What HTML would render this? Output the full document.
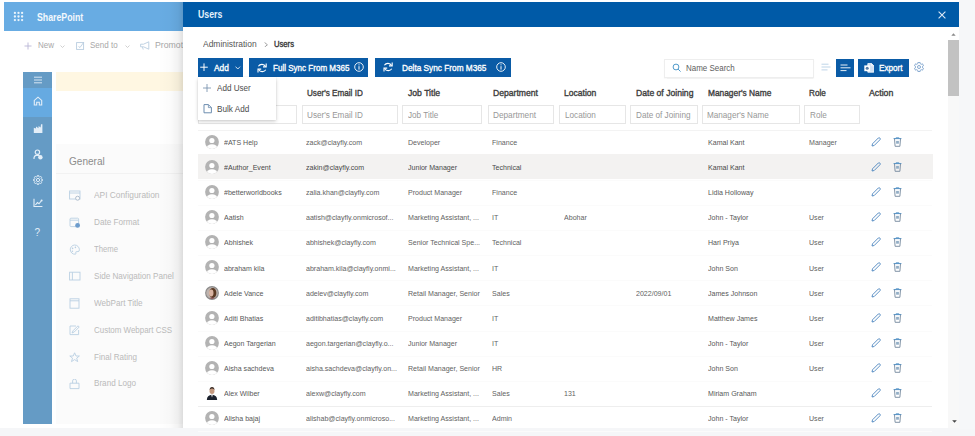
<!DOCTYPE html>
<html><head><meta charset="utf-8">
<style>
*{margin:0;padding:0;box-sizing:border-box}
html,body{width:975px;height:436px;overflow:hidden;background:#fff;font-family:"Liberation Sans",sans-serif}
.b{position:absolute;display:block}
.t{position:absolute;line-height:1;white-space:nowrap;transform-origin:0 50%}
</style></head><body>
<div class="b" style="left:0px;top:0px;width:975px;height:436px;background:#fff"></div>
<div class="b" style="left:4px;top:2px;width:200px;height:29px;background:#68ace3"></div>
<svg class="b" style="left:12.5px;top:11px;" width="11" height="11" viewBox="0 0 11 11"><circle cx="1.90" cy="1.90" r="1.15" fill="#eaf4fc"/><circle cx="5.50" cy="1.90" r="1.15" fill="#eaf4fc"/><circle cx="9.10" cy="1.90" r="1.15" fill="#eaf4fc"/><circle cx="1.90" cy="5.50" r="1.15" fill="#eaf4fc"/><circle cx="5.50" cy="5.50" r="1.15" fill="#eaf4fc"/><circle cx="9.10" cy="5.50" r="1.15" fill="#eaf4fc"/><circle cx="1.90" cy="9.10" r="1.15" fill="#eaf4fc"/><circle cx="5.50" cy="9.10" r="1.15" fill="#eaf4fc"/><circle cx="9.10" cy="9.10" r="1.15" fill="#eaf4fc"/></svg>
<div class="t" style="left:37.20px;top:13px;font-size:10px;color:#f2f8fd;font-weight:bold;transform:scaleX(0.877);">SharePoint</div>
<svg class="b" style="left:23.5px;top:41.5px;" width="8" height="8" viewBox="0 0 8 8"><path d="M4 0.5V7.5M0.5 4H7.5" stroke="#b9b5d6" stroke-width="0.9"/></svg>
<div class="t" style="left:37.70px;top:41px;font-size:8.6px;color:#a8a8a8;transform:scaleX(0.930);">New</div>
<svg class="b" style="left:59.5px;top:44.5px;" width="5" height="3" viewBox="0 0 5 3"><path d="M0.5 0.5L2.5 2.5L4.5 0.5" fill="none" stroke="#c4c4c4" stroke-width="0.8"/></svg>
<svg class="b" style="left:76px;top:41px;" width="9" height="9" viewBox="0 0 9 9"><rect x="0.6" y="1.6" width="7" height="6.8" fill="none" stroke="#b9cde0" stroke-width="0.9"/><path d="M2.5 5.5L4 6.5L7.8 1.2" fill="none" stroke="#b9cde0" stroke-width="0.9"/></svg>
<div class="t" style="left:90.30px;top:41px;font-size:8.6px;color:#a8a8a8;transform:scaleX(0.931);">Send to</div>
<svg class="b" style="left:124.5px;top:44.5px;" width="5" height="3" viewBox="0 0 5 3"><path d="M0.5 0.5L2.5 2.5L4.5 0.5" fill="none" stroke="#c4c4c4" stroke-width="0.8"/></svg>
<svg class="b" style="left:139.5px;top:41px;" width="10" height="9" viewBox="0 0 10 9"><path d="M0.6 3.2H3.5L8.8 0.8V8.2L3.5 5.8H0.6Z" fill="none" stroke="#b9cde0" stroke-width="0.9"/><path d="M2.5 6L3.2 8.5" stroke="#b9cde0" stroke-width="0.9"/></svg>
<div class="t" style="left:154.50px;top:41px;font-size:8.6px;color:#a8a8a8;transform:scaleX(1.015);">Promote</div>
<div class="b" style="left:23px;top:72px;width:29.3px;height:352px;background:#659bc5"></div>
<div class="b" style="left:23px;top:88.4px;width:29.3px;height:28.6px;background:#66aae1"></div>
<svg class="b" style="left:33px;top:76px;" width="10" height="8" viewBox="0 0 10 8"><path d="M1 1.2H9M1 4H9M1 6.8H9" stroke="#e3eef8" stroke-width="0.9"/></svg>
<svg class="b" style="left:33px;top:96px;" width="10" height="10" viewBox="0 0 10 10"><path d="M1.3 9V4.4L5 1.2L8.7 4.4V9H6.3V6.2H3.7V9Z" fill="none" stroke="#e3eef8" stroke-width="1.1"/></svg>
<svg class="b" style="left:33px;top:123px;" width="10" height="11" viewBox="0 0 10 11"><path d="M0.8 10H9.4V1.2L8 1.2L7.6 4.6L5.6 3L5.4 5.2L3.2 3.6L2.8 5.6L0.8 4.8Z" fill="#e3eef8"/></svg>
<svg class="b" style="left:33px;top:149px;" width="10" height="11" viewBox="0 0 10 11"><circle cx="4.4" cy="3.2" r="2.2" fill="none" stroke="#e3eef8" stroke-width="1.2"/><path d="M1 10Q0.6 6.4 4.4 6.2Q5.8 6.2 6.4 6.8" fill="none" stroke="#e3eef8" stroke-width="1.2"/><circle cx="7.4" cy="8.2" r="2.2" fill="#e3eef8"/></svg>
<svg class="b" style="left:33px;top:175px;" width="10" height="10" viewBox="0 0 10 10"><circle cx="5" cy="5" r="1.6" fill="none" stroke="#e3eef8" stroke-width="1"/><path d="M8.43 4.33L9.55 4.32L9.55 5.68L8.43 5.67L7.91 6.95L8.70 7.73L7.73 8.70L6.95 7.91L5.67 8.43L5.68 9.55L4.32 9.55L4.33 8.43L3.05 7.91L2.27 8.70L1.30 7.73L2.09 6.95L1.57 5.67L0.45 5.68L0.45 4.32L1.57 4.33L2.09 3.05L1.30 2.27L2.27 1.30L3.05 2.09L4.33 1.57L4.32 0.45L5.68 0.45L5.67 1.57L6.95 2.09L7.73 1.30L8.70 2.27L7.91 3.05Z" fill="none" stroke="#e3eef8" stroke-width="0.9" stroke-linejoin="round"/></svg>
<svg class="b" style="left:33px;top:197.5px;" width="10" height="9.5" viewBox="0 0 10 9.5"><path d="M1 0.8V8.6H9.4" fill="none" stroke="#e3eef8" stroke-width="1.1"/><path d="M2.4 7L4.4 4.6L6 5.8L8.2 3" fill="none" stroke="#e3eef8" stroke-width="1.1"/><circle cx="8.6" cy="2.6" r="1" fill="#e3eef8"/></svg>
<div class="t" style="left:34.60px;top:228px;font-size:10px;color:#e3eef8;">?</div>
<div class="b" style="left:56px;top:72px;width:127px;height:19px;background:#fff7e2"></div>
<div class="b" style="left:56px;top:144px;width:127px;height:280px;background:#fbfbfb"></div>
<div class="t" style="left:68.60px;top:156px;font-size:11px;color:#8c8c8c;transform:scaleX(0.912);">General</div>
<div class="b" style="left:56px;top:172.6px;width:127px;height:1px;background:#f2f2f2"></div>
<div class="t" style="left:93.50px;top:191px;font-size:8.8px;color:#bababa;transform:scaleX(0.950);">API Configuration</div>
<svg class="b" style="left:69px;top:190.2px;" width="12" height="11" viewBox="0 0 12 11"><rect x="0.6" y="1" width="10.4" height="8" fill="none" stroke="#b9cfe2" stroke-width="0.9"/><path d="M0.6 3H11" stroke="#b9cfe2" stroke-width="0.9"/><circle cx="8.6" cy="8.2" r="2" fill="#fbfbfb" stroke="#a8b8c8" stroke-width="0.9"/></svg>
<div class="t" style="left:93.50px;top:218px;font-size:8.8px;color:#bababa;transform:scaleX(0.928);">Date Format</div>
<svg class="b" style="left:69px;top:217.1px;" width="12" height="11" viewBox="0 0 12 11"><rect x="1" y="1.2" width="8.6" height="8.4" rx="1" fill="none" stroke="#b9cfe2" stroke-width="0.9"/><path d="M1 3.2H9.6" stroke="#b9cfe2" stroke-width="0.9"/><circle cx="8.6" cy="8.4" r="2.4" fill="#6d9ccc"/></svg>
<div class="t" style="left:93.50px;top:245px;font-size:8.8px;color:#bababa;transform:scaleX(0.876);">Theme</div>
<svg class="b" style="left:69px;top:244.0px;" width="12" height="11" viewBox="0 0 12 11"><path d="M5.6 1A4.6 4.6 0 1 0 6.2 10.2Q7.4 10.2 6.8 8.8Q6.4 7.6 7.8 7.6H9Q10.4 7.6 10.4 5.8A4.8 4.8 0 0 0 5.6 1Z" fill="none" stroke="#b9cfe2" stroke-width="0.9"/><circle cx="3.6" cy="4.4" r="0.8" fill="#b9cfe2"/><circle cx="6.4" cy="3.4" r="0.8" fill="#b9cfe2"/><circle cx="3.4" cy="7.2" r="0.8" fill="#b9cfe2"/></svg>
<div class="t" style="left:93.50px;top:272px;font-size:8.8px;color:#bababa;transform:scaleX(0.922);">Side Navigation Panel</div>
<svg class="b" style="left:69px;top:270.9px;" width="12" height="11" viewBox="0 0 12 11"><rect x="0.6" y="1.2" width="10.4" height="7.8" fill="none" stroke="#b9cfe2" stroke-width="0.9"/><path d="M3.4 1.2V9" stroke="#b9cfe2" stroke-width="0.9"/></svg>
<div class="t" style="left:93.50px;top:299px;font-size:8.8px;color:#bababa;transform:scaleX(0.923);">WebPart Title</div>
<svg class="b" style="left:69px;top:297.79999999999995px;" width="12" height="11" viewBox="0 0 12 11"><rect x="1" y="0.8" width="9" height="9.4" fill="none" stroke="#b9cfe2" stroke-width="0.9"/><path d="M1 2.8H10" stroke="#b9cfe2" stroke-width="0.9"/></svg>
<div class="t" style="left:93.50px;top:326px;font-size:8.8px;color:#bababa;transform:scaleX(0.903);">Custom Webpart CSS</div>
<svg class="b" style="left:69px;top:324.7px;" width="12" height="11" viewBox="0 0 12 11"><path d="M7 1H1V9.6H9.6V5" fill="none" stroke="#b9cfe2" stroke-width="0.9"/><path d="M3 8L4 5.8L9 0.8L10.2 2L5.2 7Z" fill="none" stroke="#b9cfe2" stroke-width="0.9"/></svg>
<div class="t" style="left:93.50px;top:353px;font-size:8.8px;color:#bababa;transform:scaleX(0.916);">Final Rating</div>
<svg class="b" style="left:69px;top:351.59999999999997px;" width="12" height="11" viewBox="0 0 12 11"><path d="M5.6 0.8L7 4H10.4L7.7 6.1L8.7 9.6L5.6 7.6L2.5 9.6L3.5 6.1L0.8 4H4.2Z" fill="none" stroke="#b9cfe2" stroke-width="0.9"/></svg>
<div class="t" style="left:93.50px;top:379px;font-size:8.8px;color:#bababa;transform:scaleX(0.923);">Brand Logo</div>
<svg class="b" style="left:69px;top:378.5px;" width="12" height="11" viewBox="0 0 12 11"><path d="M1 4.2H10V9.6H1Z M3.6 4.2V2A1.9 1.9 0 0 1 7.4 2V4.2" fill="none" stroke="#b9cfe2" stroke-width="0.9"/></svg>
<div class="b" style="left:158px;top:2px;width:25px;height:426px;background:linear-gradient(to right,rgba(0,0,0,0) 0%,rgba(0,0,0,0.015) 50%,rgba(0,0,0,0.05) 80%,rgba(0,0,0,0.12) 100%)"></div>
<div class="b" style="left:0px;top:427.6px;width:975px;height:8.4px;background:#f5f6f8"></div>
<div class="b" style="left:958.8px;top:0px;width:16.2px;height:428.5px;background:#f6f7f9"></div>
<div class="b" style="left:183px;top:2px;width:775.8px;height:425.6px;background:#fff"></div>
<div class="b" style="left:183px;top:2px;width:775.8px;height:25px;background:#005aa7"></div>
<div class="t" style="left:197.70px;top:10px;font-size:10.4px;color:#e4f0fb;font-weight:bold;transform:scaleX(0.844);">Users</div>
<svg class="b" style="left:937.5px;top:11px;" width="8" height="8" viewBox="0 0 8 8"><path d="M0.6 0.6L7.4 7.4M7.4 0.6L0.6 7.4" stroke="#dce9f6" stroke-width="1.1"/></svg>
<div class="t" style="left:202.60px;top:40px;font-size:8.6px;color:#555555;transform:scaleX(0.984);">Administration</div>
<svg class="b" style="left:264px;top:41.6px;" width="4.5" height="5.6" viewBox="0 0 4.5 5.6"><path d="M0.6 0.5L3.4 2.8L0.6 5.1" fill="none" stroke="#8f8f8f" stroke-width="0.85"/></svg>
<div class="t" style="left:273.80px;top:40px;font-size:8.6px;color:#333333;-webkit-text-stroke:0.35px #333333;transform:scaleX(0.891);">Users</div>
<div class="b" style="left:198px;top:58.4px;width:45.4px;height:18.6px;background:#0a5ba6"></div>
<svg class="b" style="left:200px;top:62.6px;" width="8" height="8.4" viewBox="0 0 8 8.4"><path d="M4 0.4V8M0.2 4.2H7.8" stroke="#fff" stroke-width="1"/></svg>
<div class="t" style="left:214.00px;top:63px;font-size:9.6px;color:#fff;-webkit-text-stroke:0.35px #fff;transform:scaleX(0.866);">Add</div>
<svg class="b" style="left:235px;top:65.5px;" width="6" height="4" viewBox="0 0 6 4"><path d="M0.5 0.6L2.8 3L5.1 0.6" fill="none" stroke="#e0ecf7" stroke-width="0.9"/></svg>
<div class="b" style="left:249.2px;top:58.4px;width:119px;height:18.6px;background:#0a5ba6"></div>
<svg class="b" style="left:257px;top:62.5px;" width="10.4" height="10" viewBox="0 0 10.4 10"><path d="M8.6 3.6A4.2 4.2 0 0 0 1.4 3.2" fill="none" stroke="#fff" stroke-width="1.1"/><path d="M9.2 0.6V3.9H6" fill="none" stroke="#fff" stroke-width="1.1"/><path d="M1.6 6.4A4.2 4.2 0 0 0 8.8 6.8" fill="none" stroke="#fff" stroke-width="1.1"/><path d="M1 9.4V6.1H4.2" fill="none" stroke="#fff" stroke-width="1.1"/></svg>
<div class="t" style="left:272.80px;top:63px;font-size:9.6px;color:#fff;-webkit-text-stroke:0.35px #fff;transform:scaleX(0.839);">Full Sync From M365</div>
<svg class="b" style="left:353.5px;top:62px;" width="10" height="10" viewBox="0 0 10 10"><circle cx="5" cy="5" r="4.3" fill="none" stroke="#fff" stroke-width="0.9"/><path d="M5 4.2V7.6" stroke="#fff" stroke-width="1"/><circle cx="5" cy="2.8" r="0.6" fill="#fff"/></svg>
<div class="b" style="left:374.8px;top:58.4px;width:136px;height:18.6px;background:#0a5ba6"></div>
<svg class="b" style="left:382.8px;top:62.4px;" width="10.4" height="10" viewBox="0 0 10.4 10"><path d="M8.6 3.6A4.2 4.2 0 0 0 1.4 3.2" fill="none" stroke="#fff" stroke-width="1.1"/><path d="M9.2 0.6V3.9H6" fill="none" stroke="#fff" stroke-width="1.1"/><path d="M1.6 6.4A4.2 4.2 0 0 0 8.8 6.8" fill="none" stroke="#fff" stroke-width="1.1"/><path d="M1 9.4V6.1H4.2" fill="none" stroke="#fff" stroke-width="1.1"/></svg>
<div class="t" style="left:402.00px;top:63px;font-size:9.6px;color:#fff;-webkit-text-stroke:0.35px #fff;transform:scaleX(0.861);">Delta Sync From M365</div>
<svg class="b" style="left:495.8px;top:62px;" width="10" height="10" viewBox="0 0 10 10"><circle cx="5" cy="5" r="4.3" fill="none" stroke="#fff" stroke-width="0.9"/><path d="M5 4.2V7.6" stroke="#fff" stroke-width="1"/><circle cx="5" cy="2.8" r="0.6" fill="#fff"/></svg>
<div class="b" style="left:664.4px;top:58.7px;width:149.5px;height:19.2px;background:#fff;border:1px solid #eeeeee;box-shadow:0 0.5px 1px rgba(0,0,0,0.05)"></div>
<svg class="b" style="left:671.5px;top:62.5px;" width="10" height="10" viewBox="0 0 10 10"><circle cx="4" cy="4" r="2.9" fill="none" stroke="#3d8ec4" stroke-width="0.9"/><path d="M6.1 6.1L8.6 8.6" stroke="#3d8ec4" stroke-width="0.9"/></svg>
<div class="t" style="left:686.20px;top:64px;font-size:8.6px;color:#5e5e5e;transform:scaleX(0.928);">Name Search</div>
<svg class="b" style="left:821px;top:63px;" width="10" height="8" viewBox="0 0 10 8"><path d="M0.5 1.2H7.5M0.5 4H9.5M0.5 6.9H6.5" stroke="#a9c7e0" stroke-width="0.75"/></svg>
<div class="b" style="left:836px;top:58.5px;width:18px;height:18.3px;background:#0a5ba6"></div>
<svg class="b" style="left:839.5px;top:63.5px;" width="11" height="8" viewBox="0 0 11 8"><path d="M0.5 1H7.5M0.5 3.8H10.5M0.5 6.6H6.5" stroke="#fff" stroke-width="0.9"/></svg>
<div class="b" style="left:857.5px;top:58.5px;width:51.3px;height:18.5px;background:#0a5ba6"></div>
<svg class="b" style="left:863.5px;top:62.8px;" width="10.5" height="10" viewBox="0 0 10.5 10"><path d="M3.8 0.6H7.6L9.8 2.8V9.2H3.8Z" fill="#cfe1f3" stroke="#fff" stroke-width="0.8"/><path d="M7.6 0.6V2.8H9.8" fill="none" stroke="#fff" stroke-width="0.7"/><rect x="0.3" y="2.4" width="5.8" height="5.8" fill="#fff"/><circle cx="3.2" cy="5.3" r="1.5" fill="#5a7ea6"/></svg>
<div class="t" style="left:878.70px;top:63px;font-size:9.6px;color:#fff;-webkit-text-stroke:0.35px #fff;transform:scaleX(0.851);">Export</div>
<svg class="b" style="left:914.3px;top:62px;" width="10" height="10" viewBox="0 0 10 10"><circle cx="5" cy="5" r="1.5" fill="none" stroke="#7aa2cc" stroke-width="0.9"/><path d="M3.87 1.58L3.90 0.43L6.10 0.43L6.13 1.58L7.40 2.32L8.41 1.76L9.51 3.67L8.52 4.27L8.52 5.73L9.51 6.33L8.41 8.24L7.40 7.68L6.13 8.42L6.10 9.57L3.90 9.57L3.87 8.42L2.60 7.68L1.59 8.24L0.49 6.33L1.48 5.73L1.48 4.27L0.49 3.67L1.59 1.76L2.60 2.32Z" fill="none" stroke="#7aa2cc" stroke-width="0.9" stroke-linejoin="round"/></svg>
<div class="t" style="left:306.70px;top:89px;font-size:8.6px;color:#3d3d3d;-webkit-text-stroke:0.35px #3d3d3d;transform:scaleX(0.946);">User&#39;s Email ID</div>
<div class="t" style="left:407.80px;top:89px;font-size:8.6px;color:#3d3d3d;-webkit-text-stroke:0.35px #3d3d3d;transform:scaleX(1.005);">Job Title</div>
<div class="t" style="left:492.80px;top:89px;font-size:8.6px;color:#3d3d3d;-webkit-text-stroke:0.35px #3d3d3d;transform:scaleX(1.001);">Department</div>
<div class="t" style="left:563.70px;top:89px;font-size:8.6px;color:#3d3d3d;-webkit-text-stroke:0.35px #3d3d3d;transform:scaleX(0.993);">Location</div>
<div class="t" style="left:635.50px;top:89px;font-size:8.6px;color:#3d3d3d;-webkit-text-stroke:0.35px #3d3d3d;transform:scaleX(1.002);">Date of Joining</div>
<div class="t" style="left:707.80px;top:89px;font-size:8.6px;color:#3d3d3d;-webkit-text-stroke:0.35px #3d3d3d;transform:scaleX(0.971);">Manager&#39;s Name</div>
<div class="t" style="left:808.70px;top:89px;font-size:8.6px;color:#3d3d3d;-webkit-text-stroke:0.35px #3d3d3d;transform:scaleX(0.950);">Role</div>
<div class="t" style="left:868.70px;top:89px;font-size:8.6px;color:#3d3d3d;-webkit-text-stroke:0.35px #3d3d3d;transform:scaleX(1.017);">Action</div>
<div class="b" style="left:198px;top:105.3px;width:99px;height:19px;background:#fff;border:1px solid #e6e6e6"></div>
<div class="b" style="left:301.5px;top:105.3px;width:96.5px;height:19px;background:#fff;border:1px solid #e6e6e6"></div>
<div class="t" style="left:307.10px;top:111px;font-size:8.4px;color:#979797;transform:scaleX(0.975);">User&#39;s Email ID</div>
<div class="b" style="left:402.3px;top:105.3px;width:80.2px;height:19px;background:#fff;border:1px solid #e6e6e6"></div>
<div class="t" style="left:407.90px;top:111px;font-size:8.4px;color:#979797;transform:scaleX(0.975);">Job Title</div>
<div class="b" style="left:487.7px;top:105.3px;width:66.3px;height:19px;background:#fff;border:1px solid #e6e6e6"></div>
<div class="t" style="left:493.30px;top:111px;font-size:8.4px;color:#979797;transform:scaleX(0.984);">Department</div>
<div class="b" style="left:559px;top:105.3px;width:67.4px;height:19px;background:#fff;border:1px solid #e6e6e6"></div>
<div class="t" style="left:564.60px;top:111px;font-size:8.4px;color:#979797;transform:scaleX(0.975);">Location</div>
<div class="b" style="left:630px;top:105.3px;width:68px;height:19px;background:#fff;border:1px solid #e6e6e6"></div>
<div class="t" style="left:635.60px;top:111px;font-size:8.4px;color:#979797;transform:scaleX(0.975);">Date of Joining</div>
<div class="b" style="left:701.7px;top:105.3px;width:98.3px;height:19px;background:#fff;border:1px solid #e6e6e6"></div>
<div class="t" style="left:707.30px;top:111px;font-size:8.4px;color:#979797;transform:scaleX(0.972);">Manager&#39;s Name</div>
<div class="b" style="left:804px;top:105.3px;width:56px;height:19px;background:#fff;border:1px solid #e6e6e6"></div>
<div class="t" style="left:809.60px;top:111px;font-size:8.4px;color:#979797;transform:scaleX(0.975);">Role</div>
<div class="b" style="left:198px;top:129.8px;width:734px;height:1px;background:#f3f3f3"></div>
<div class="b" style="left:198px;top:154.89px;width:734px;height:1px;background:#fbfbfb"></div>
<svg class="b" style="left:204.6px;top:135.0px;" width="14" height="14" viewBox="0 0 14 14"><defs><clipPath id="cp0"><circle cx="7" cy="7" r="6.9"/></clipPath></defs><g clip-path="url(#cp0)"><rect width="14" height="14" fill="#b3b3b3"/><circle cx="6.9" cy="5.5" r="2.6" fill="#fff"/><ellipse cx="7" cy="14" rx="5.6" ry="4.8" fill="#fff"/></g></svg>
<div class="t" style="left:224.00px;top:139px;font-size:7.4px;color:#575757;transform:scaleX(0.955);">#ATS Help</div>
<div class="t" style="left:306.30px;top:139px;font-size:7.4px;color:#626262;transform:scaleX(0.955);">zack@clayfly.com</div>
<div class="t" style="left:408.00px;top:139px;font-size:7.4px;color:#626262;transform:scaleX(0.955);">Developer</div>
<div class="t" style="left:492.00px;top:139px;font-size:7.4px;color:#626262;transform:scaleX(0.955);">Finance</div>
<div class="t" style="left:707.80px;top:139px;font-size:7.4px;color:#575757;transform:scaleX(0.955);">Kamal Kant</div>
<div class="t" style="left:808.70px;top:139px;font-size:7.4px;color:#626262;transform:scaleX(0.955);">Manager</div>
<svg class="b" style="left:871px;top:137.0px;" width="10" height="10" viewBox="0 0 10 10"><path d="M1 9L1.5 6.8L7.3 1Q8.2 0.3 8.9 1.1Q9.7 1.8 9 2.7L3.2 8.5Z" fill="none" stroke="#4a83bd" stroke-width="0.9" stroke-linejoin="round"/></svg>
<svg class="b" style="left:893.3px;top:137.0px;" width="9" height="10" viewBox="0 0 9 10"><path d="M0.6 1.6H8.4" stroke="#4f8fc4" stroke-width="1"/><path d="M3.2 1.4V0.6H5.8V1.4" fill="none" stroke="#4f8fc4" stroke-width="0.7"/><path d="M1.5 1.8L2.1 9.3H6.9L7.5 1.8" fill="none" stroke="#73879c" stroke-width="0.9"/><rect x="3.1" y="3.9" width="2.8" height="2.8" fill="#93aec6"/></svg>
<div class="b" style="left:198px;top:154.09px;width:734.5px;height:25.1px;background:#f3f2f1"></div>
<div class="b" style="left:198px;top:179.98px;width:734px;height:1px;background:#fbfbfb"></div>
<svg class="b" style="left:204.6px;top:160.09px;" width="14" height="14" viewBox="0 0 14 14"><defs><clipPath id="cp1"><circle cx="7" cy="7" r="6.9"/></clipPath></defs><g clip-path="url(#cp1)"><rect width="14" height="14" fill="#b3b3b3"/><circle cx="6.9" cy="5.5" r="2.6" fill="#fff"/><ellipse cx="7" cy="14" rx="5.6" ry="4.8" fill="#fff"/></g></svg>
<div class="t" style="left:224.00px;top:164px;font-size:7.4px;color:#484848;transform:scaleX(0.955);">#Author_Event</div>
<div class="t" style="left:306.30px;top:164px;font-size:7.4px;color:#484848;transform:scaleX(0.955);">zakin@clayfly.com</div>
<div class="t" style="left:408.00px;top:164px;font-size:7.4px;color:#484848;transform:scaleX(0.955);">Junior Manager</div>
<div class="t" style="left:492.00px;top:164px;font-size:7.4px;color:#484848;transform:scaleX(0.955);">Technical</div>
<div class="t" style="left:707.80px;top:164px;font-size:7.4px;color:#484848;transform:scaleX(0.955);">Kamal Kant</div>
<svg class="b" style="left:871px;top:162.09px;" width="10" height="10" viewBox="0 0 10 10"><path d="M1 9L1.5 6.8L7.3 1Q8.2 0.3 8.9 1.1Q9.7 1.8 9 2.7L3.2 8.5Z" fill="none" stroke="#4a83bd" stroke-width="0.9" stroke-linejoin="round"/></svg>
<svg class="b" style="left:893.3px;top:162.09px;" width="9" height="10" viewBox="0 0 9 10"><path d="M0.6 1.6H8.4" stroke="#4f8fc4" stroke-width="1"/><path d="M3.2 1.4V0.6H5.8V1.4" fill="none" stroke="#4f8fc4" stroke-width="0.7"/><path d="M1.5 1.8L2.1 9.3H6.9L7.5 1.8" fill="none" stroke="#73879c" stroke-width="0.9"/><rect x="3.1" y="3.9" width="2.8" height="2.8" fill="#93aec6"/></svg>
<div class="b" style="left:198px;top:205.07px;width:734px;height:1px;background:#fbfbfb"></div>
<svg class="b" style="left:204.6px;top:185.18px;" width="14" height="14" viewBox="0 0 14 14"><defs><clipPath id="cp2"><circle cx="7" cy="7" r="6.9"/></clipPath></defs><g clip-path="url(#cp2)"><rect width="14" height="14" fill="#b3b3b3"/><circle cx="6.9" cy="5.5" r="2.6" fill="#fff"/><ellipse cx="7" cy="14" rx="5.6" ry="4.8" fill="#fff"/></g></svg>
<div class="t" style="left:224.00px;top:189px;font-size:7.4px;color:#575757;transform:scaleX(0.955);">#betterworldbooks</div>
<div class="t" style="left:306.30px;top:189px;font-size:7.4px;color:#626262;transform:scaleX(0.955);">zalia.khan@clayfly.com</div>
<div class="t" style="left:408.00px;top:189px;font-size:7.4px;color:#626262;transform:scaleX(0.955);">Product Manager</div>
<div class="t" style="left:492.00px;top:189px;font-size:7.4px;color:#626262;transform:scaleX(0.955);">Finance</div>
<div class="t" style="left:707.80px;top:189px;font-size:7.4px;color:#575757;transform:scaleX(0.955);">Lidia Holloway</div>
<svg class="b" style="left:871px;top:187.18px;" width="10" height="10" viewBox="0 0 10 10"><path d="M1 9L1.5 6.8L7.3 1Q8.2 0.3 8.9 1.1Q9.7 1.8 9 2.7L3.2 8.5Z" fill="none" stroke="#4a83bd" stroke-width="0.9" stroke-linejoin="round"/></svg>
<svg class="b" style="left:893.3px;top:187.18px;" width="9" height="10" viewBox="0 0 9 10"><path d="M0.6 1.6H8.4" stroke="#4f8fc4" stroke-width="1"/><path d="M3.2 1.4V0.6H5.8V1.4" fill="none" stroke="#4f8fc4" stroke-width="0.7"/><path d="M1.5 1.8L2.1 9.3H6.9L7.5 1.8" fill="none" stroke="#73879c" stroke-width="0.9"/><rect x="3.1" y="3.9" width="2.8" height="2.8" fill="#93aec6"/></svg>
<div class="b" style="left:198px;top:230.16px;width:734px;height:1px;background:#fbfbfb"></div>
<svg class="b" style="left:204.6px;top:210.26999999999998px;" width="14" height="14" viewBox="0 0 14 14"><defs><clipPath id="cp3"><circle cx="7" cy="7" r="6.9"/></clipPath></defs><g clip-path="url(#cp3)"><rect width="14" height="14" fill="#b3b3b3"/><circle cx="6.9" cy="5.5" r="2.6" fill="#fff"/><ellipse cx="7" cy="14" rx="5.6" ry="4.8" fill="#fff"/></g></svg>
<div class="t" style="left:224.00px;top:214px;font-size:7.4px;color:#575757;transform:scaleX(0.955);">Aatish</div>
<div class="t" style="left:306.30px;top:214px;font-size:7.4px;color:#626262;transform:scaleX(0.955);">aatish@clayfly.onmicrosof...</div>
<div class="t" style="left:408.00px;top:214px;font-size:7.4px;color:#626262;transform:scaleX(0.955);">Marketing Assistant, ...</div>
<div class="t" style="left:492.00px;top:214px;font-size:7.4px;color:#626262;transform:scaleX(0.955);">IT</div>
<div class="t" style="left:564.00px;top:214px;font-size:7.4px;color:#626262;transform:scaleX(0.955);">Abohar</div>
<div class="t" style="left:707.80px;top:214px;font-size:7.4px;color:#575757;transform:scaleX(0.955);">John - Taylor</div>
<div class="t" style="left:808.70px;top:214px;font-size:7.4px;color:#626262;transform:scaleX(0.955);">User</div>
<svg class="b" style="left:871px;top:212.26999999999998px;" width="10" height="10" viewBox="0 0 10 10"><path d="M1 9L1.5 6.8L7.3 1Q8.2 0.3 8.9 1.1Q9.7 1.8 9 2.7L3.2 8.5Z" fill="none" stroke="#4a83bd" stroke-width="0.9" stroke-linejoin="round"/></svg>
<svg class="b" style="left:893.3px;top:212.26999999999998px;" width="9" height="10" viewBox="0 0 9 10"><path d="M0.6 1.6H8.4" stroke="#4f8fc4" stroke-width="1"/><path d="M3.2 1.4V0.6H5.8V1.4" fill="none" stroke="#4f8fc4" stroke-width="0.7"/><path d="M1.5 1.8L2.1 9.3H6.9L7.5 1.8" fill="none" stroke="#73879c" stroke-width="0.9"/><rect x="3.1" y="3.9" width="2.8" height="2.8" fill="#93aec6"/></svg>
<div class="b" style="left:198px;top:255.25px;width:734px;height:1px;background:#fbfbfb"></div>
<svg class="b" style="left:204.6px;top:235.36px;" width="14" height="14" viewBox="0 0 14 14"><defs><clipPath id="cp4"><circle cx="7" cy="7" r="6.9"/></clipPath></defs><g clip-path="url(#cp4)"><rect width="14" height="14" fill="#b3b3b3"/><circle cx="6.9" cy="5.5" r="2.6" fill="#fff"/><ellipse cx="7" cy="14" rx="5.6" ry="4.8" fill="#fff"/></g></svg>
<div class="t" style="left:224.00px;top:239px;font-size:7.4px;color:#575757;transform:scaleX(0.955);">Abhishek</div>
<div class="t" style="left:306.30px;top:239px;font-size:7.4px;color:#626262;transform:scaleX(0.955);">abhishek@clayfly.com</div>
<div class="t" style="left:408.00px;top:239px;font-size:7.4px;color:#626262;transform:scaleX(0.955);">Senior Technical Spe...</div>
<div class="t" style="left:492.00px;top:239px;font-size:7.4px;color:#626262;transform:scaleX(0.955);">Technical</div>
<div class="t" style="left:707.80px;top:239px;font-size:7.4px;color:#575757;transform:scaleX(0.955);">Hari Priya</div>
<div class="t" style="left:808.70px;top:239px;font-size:7.4px;color:#626262;transform:scaleX(0.955);">User</div>
<svg class="b" style="left:871px;top:237.36px;" width="10" height="10" viewBox="0 0 10 10"><path d="M1 9L1.5 6.8L7.3 1Q8.2 0.3 8.9 1.1Q9.7 1.8 9 2.7L3.2 8.5Z" fill="none" stroke="#4a83bd" stroke-width="0.9" stroke-linejoin="round"/></svg>
<svg class="b" style="left:893.3px;top:237.36px;" width="9" height="10" viewBox="0 0 9 10"><path d="M0.6 1.6H8.4" stroke="#4f8fc4" stroke-width="1"/><path d="M3.2 1.4V0.6H5.8V1.4" fill="none" stroke="#4f8fc4" stroke-width="0.7"/><path d="M1.5 1.8L2.1 9.3H6.9L7.5 1.8" fill="none" stroke="#73879c" stroke-width="0.9"/><rect x="3.1" y="3.9" width="2.8" height="2.8" fill="#93aec6"/></svg>
<div class="b" style="left:198px;top:280.34px;width:734px;height:1px;background:#fbfbfb"></div>
<svg class="b" style="left:204.6px;top:260.45px;" width="14" height="14" viewBox="0 0 14 14"><defs><clipPath id="cp5"><circle cx="7" cy="7" r="6.9"/></clipPath></defs><g clip-path="url(#cp5)"><rect width="14" height="14" fill="#b3b3b3"/><circle cx="6.9" cy="5.5" r="2.6" fill="#fff"/><ellipse cx="7" cy="14" rx="5.6" ry="4.8" fill="#fff"/></g></svg>
<div class="t" style="left:224.00px;top:265px;font-size:7.4px;color:#575757;transform:scaleX(0.955);">abraham kila</div>
<div class="t" style="left:306.30px;top:265px;font-size:7.4px;color:#626262;transform:scaleX(0.955);">abraham.kila@clayfly.onmi...</div>
<div class="t" style="left:408.00px;top:265px;font-size:7.4px;color:#626262;transform:scaleX(0.955);">Marketing Assistant, ...</div>
<div class="t" style="left:492.00px;top:265px;font-size:7.4px;color:#626262;transform:scaleX(0.955);">IT</div>
<div class="t" style="left:707.80px;top:265px;font-size:7.4px;color:#575757;transform:scaleX(0.955);">John Son</div>
<div class="t" style="left:808.70px;top:265px;font-size:7.4px;color:#626262;transform:scaleX(0.955);">User</div>
<svg class="b" style="left:871px;top:262.45px;" width="10" height="10" viewBox="0 0 10 10"><path d="M1 9L1.5 6.8L7.3 1Q8.2 0.3 8.9 1.1Q9.7 1.8 9 2.7L3.2 8.5Z" fill="none" stroke="#4a83bd" stroke-width="0.9" stroke-linejoin="round"/></svg>
<svg class="b" style="left:893.3px;top:262.45px;" width="9" height="10" viewBox="0 0 9 10"><path d="M0.6 1.6H8.4" stroke="#4f8fc4" stroke-width="1"/><path d="M3.2 1.4V0.6H5.8V1.4" fill="none" stroke="#4f8fc4" stroke-width="0.7"/><path d="M1.5 1.8L2.1 9.3H6.9L7.5 1.8" fill="none" stroke="#73879c" stroke-width="0.9"/><rect x="3.1" y="3.9" width="2.8" height="2.8" fill="#93aec6"/></svg>
<div class="b" style="left:198px;top:305.43px;width:734px;height:1px;background:#fbfbfb"></div>
<svg class="b" style="left:204.6px;top:286.03999999999996px;" width="14" height="14" viewBox="0 0 14 14"><circle cx="7" cy="7" r="6.9" fill="#8a8a8a"/><defs><clipPath id="adl"><circle cx="7" cy="7" r="5.8"/></clipPath></defs><g clip-path="url(#adl)"><rect width="14" height="14" fill="#bdb3ae"/><ellipse cx="7.8" cy="7" rx="3.6" ry="5" fill="#5a3a24"/><ellipse cx="6.2" cy="7" rx="2.3" ry="3.4" fill="#d9b4a2"/><path d="M1 13Q7 9.8 13 13V14H1Z" fill="#7e3c3e"/></g></svg>
<div class="t" style="left:224.00px;top:290px;font-size:7.4px;color:#575757;transform:scaleX(0.955);">Adele Vance</div>
<div class="t" style="left:306.30px;top:290px;font-size:7.4px;color:#626262;transform:scaleX(0.955);">adelev@clayfly.com</div>
<div class="t" style="left:408.00px;top:290px;font-size:7.4px;color:#626262;transform:scaleX(0.955);">Retail Manager, Senior</div>
<div class="t" style="left:492.00px;top:290px;font-size:7.4px;color:#626262;transform:scaleX(0.955);">Sales</div>
<div class="t" style="left:635.50px;top:290px;font-size:7.4px;color:#626262;transform:scaleX(0.955);">2022/09/01</div>
<div class="t" style="left:707.80px;top:290px;font-size:7.4px;color:#575757;transform:scaleX(0.955);">James Johnson</div>
<div class="t" style="left:808.70px;top:290px;font-size:7.4px;color:#626262;transform:scaleX(0.955);">User</div>
<svg class="b" style="left:871px;top:287.53999999999996px;" width="10" height="10" viewBox="0 0 10 10"><path d="M1 9L1.5 6.8L7.3 1Q8.2 0.3 8.9 1.1Q9.7 1.8 9 2.7L3.2 8.5Z" fill="none" stroke="#4a83bd" stroke-width="0.9" stroke-linejoin="round"/></svg>
<svg class="b" style="left:893.3px;top:287.53999999999996px;" width="9" height="10" viewBox="0 0 9 10"><path d="M0.6 1.6H8.4" stroke="#4f8fc4" stroke-width="1"/><path d="M3.2 1.4V0.6H5.8V1.4" fill="none" stroke="#4f8fc4" stroke-width="0.7"/><path d="M1.5 1.8L2.1 9.3H6.9L7.5 1.8" fill="none" stroke="#73879c" stroke-width="0.9"/><rect x="3.1" y="3.9" width="2.8" height="2.8" fill="#93aec6"/></svg>
<div class="b" style="left:198px;top:330.52px;width:734px;height:1px;background:#fbfbfb"></div>
<svg class="b" style="left:204.6px;top:310.63px;" width="14" height="14" viewBox="0 0 14 14"><defs><clipPath id="cp7"><circle cx="7" cy="7" r="6.9"/></clipPath></defs><g clip-path="url(#cp7)"><rect width="14" height="14" fill="#b3b3b3"/><circle cx="6.9" cy="5.5" r="2.6" fill="#fff"/><ellipse cx="7" cy="14" rx="5.6" ry="4.8" fill="#fff"/></g></svg>
<div class="t" style="left:224.00px;top:315px;font-size:7.4px;color:#575757;transform:scaleX(0.955);">Aditi Bhatias</div>
<div class="t" style="left:306.30px;top:315px;font-size:7.4px;color:#626262;transform:scaleX(0.955);">aditibhatias@clayfly.com</div>
<div class="t" style="left:408.00px;top:315px;font-size:7.4px;color:#626262;transform:scaleX(0.955);">Product Manager</div>
<div class="t" style="left:492.00px;top:315px;font-size:7.4px;color:#626262;transform:scaleX(0.955);">IT</div>
<div class="t" style="left:707.80px;top:315px;font-size:7.4px;color:#575757;transform:scaleX(0.955);">Matthew James</div>
<div class="t" style="left:808.70px;top:315px;font-size:7.4px;color:#626262;transform:scaleX(0.955);">User</div>
<svg class="b" style="left:871px;top:312.63px;" width="10" height="10" viewBox="0 0 10 10"><path d="M1 9L1.5 6.8L7.3 1Q8.2 0.3 8.9 1.1Q9.7 1.8 9 2.7L3.2 8.5Z" fill="none" stroke="#4a83bd" stroke-width="0.9" stroke-linejoin="round"/></svg>
<svg class="b" style="left:893.3px;top:312.63px;" width="9" height="10" viewBox="0 0 9 10"><path d="M0.6 1.6H8.4" stroke="#4f8fc4" stroke-width="1"/><path d="M3.2 1.4V0.6H5.8V1.4" fill="none" stroke="#4f8fc4" stroke-width="0.7"/><path d="M1.5 1.8L2.1 9.3H6.9L7.5 1.8" fill="none" stroke="#73879c" stroke-width="0.9"/><rect x="3.1" y="3.9" width="2.8" height="2.8" fill="#93aec6"/></svg>
<div class="b" style="left:198px;top:355.61px;width:734px;height:1px;background:#fbfbfb"></div>
<svg class="b" style="left:204.6px;top:335.72px;" width="14" height="14" viewBox="0 0 14 14"><defs><clipPath id="cp8"><circle cx="7" cy="7" r="6.9"/></clipPath></defs><g clip-path="url(#cp8)"><rect width="14" height="14" fill="#b3b3b3"/><circle cx="6.9" cy="5.5" r="2.6" fill="#fff"/><ellipse cx="7" cy="14" rx="5.6" ry="4.8" fill="#fff"/></g></svg>
<div class="t" style="left:224.00px;top:340px;font-size:7.4px;color:#575757;transform:scaleX(0.955);">Aegon Targerian</div>
<div class="t" style="left:306.30px;top:340px;font-size:7.4px;color:#626262;transform:scaleX(0.955);">aegon.targerian@clayfly.o...</div>
<div class="t" style="left:408.00px;top:340px;font-size:7.4px;color:#626262;transform:scaleX(0.955);">Junior Manager</div>
<div class="t" style="left:492.00px;top:340px;font-size:7.4px;color:#626262;transform:scaleX(0.955);">IT</div>
<div class="t" style="left:707.80px;top:340px;font-size:7.4px;color:#575757;transform:scaleX(0.955);">John - Taylor</div>
<div class="t" style="left:808.70px;top:340px;font-size:7.4px;color:#626262;transform:scaleX(0.955);">User</div>
<svg class="b" style="left:871px;top:337.72px;" width="10" height="10" viewBox="0 0 10 10"><path d="M1 9L1.5 6.8L7.3 1Q8.2 0.3 8.9 1.1Q9.7 1.8 9 2.7L3.2 8.5Z" fill="none" stroke="#4a83bd" stroke-width="0.9" stroke-linejoin="round"/></svg>
<svg class="b" style="left:893.3px;top:337.72px;" width="9" height="10" viewBox="0 0 9 10"><path d="M0.6 1.6H8.4" stroke="#4f8fc4" stroke-width="1"/><path d="M3.2 1.4V0.6H5.8V1.4" fill="none" stroke="#4f8fc4" stroke-width="0.7"/><path d="M1.5 1.8L2.1 9.3H6.9L7.5 1.8" fill="none" stroke="#73879c" stroke-width="0.9"/><rect x="3.1" y="3.9" width="2.8" height="2.8" fill="#93aec6"/></svg>
<div class="b" style="left:198px;top:380.7px;width:734px;height:1px;background:#fbfbfb"></div>
<svg class="b" style="left:204.6px;top:360.81px;" width="14" height="14" viewBox="0 0 14 14"><defs><clipPath id="cp9"><circle cx="7" cy="7" r="6.9"/></clipPath></defs><g clip-path="url(#cp9)"><rect width="14" height="14" fill="#b3b3b3"/><circle cx="6.9" cy="5.5" r="2.6" fill="#fff"/><ellipse cx="7" cy="14" rx="5.6" ry="4.8" fill="#fff"/></g></svg>
<div class="t" style="left:224.00px;top:365px;font-size:7.4px;color:#575757;transform:scaleX(0.955);">Aisha sachdeva</div>
<div class="t" style="left:306.30px;top:365px;font-size:7.4px;color:#626262;transform:scaleX(0.955);">aisha.sachdeva@clayfly.on...</div>
<div class="t" style="left:408.00px;top:365px;font-size:7.4px;color:#626262;transform:scaleX(0.955);">Retail Manager, Senior</div>
<div class="t" style="left:492.00px;top:365px;font-size:7.4px;color:#626262;transform:scaleX(0.955);">HR</div>
<div class="t" style="left:707.80px;top:365px;font-size:7.4px;color:#575757;transform:scaleX(0.955);">John Son</div>
<div class="t" style="left:808.70px;top:365px;font-size:7.4px;color:#626262;transform:scaleX(0.955);">User</div>
<svg class="b" style="left:871px;top:362.81px;" width="10" height="10" viewBox="0 0 10 10"><path d="M1 9L1.5 6.8L7.3 1Q8.2 0.3 8.9 1.1Q9.7 1.8 9 2.7L3.2 8.5Z" fill="none" stroke="#4a83bd" stroke-width="0.9" stroke-linejoin="round"/></svg>
<svg class="b" style="left:893.3px;top:362.81px;" width="9" height="10" viewBox="0 0 9 10"><path d="M0.6 1.6H8.4" stroke="#4f8fc4" stroke-width="1"/><path d="M3.2 1.4V0.6H5.8V1.4" fill="none" stroke="#4f8fc4" stroke-width="0.7"/><path d="M1.5 1.8L2.1 9.3H6.9L7.5 1.8" fill="none" stroke="#73879c" stroke-width="0.9"/><rect x="3.1" y="3.9" width="2.8" height="2.8" fill="#93aec6"/></svg>
<div class="b" style="left:198px;top:405.79px;width:734px;height:1px;background:#eeeeee"></div>
<svg class="b" style="left:204.6px;top:385.9px;" width="14" height="14" viewBox="0 0 14 14"><ellipse cx="7" cy="5" rx="2.5" ry="3" fill="#c59a80"/><path d="M4.5 4Q4.8 1 7 1Q9.4 1 9.5 4Q9 2.4 7 2.4Q5 2.4 4.5 4Z" fill="#3a2a22"/><path d="M1.8 14Q2 9.2 7 8.8Q12 9.2 12.2 14Z" fill="#1c222e"/><path d="M6.2 8.9L7 11.6L7.8 8.9Z" fill="#e6e6e6"/></svg>
<div class="t" style="left:224.00px;top:390px;font-size:7.4px;color:#575757;transform:scaleX(0.955);">Alex Wilber</div>
<div class="t" style="left:306.30px;top:390px;font-size:7.4px;color:#626262;transform:scaleX(0.955);">alexw@clayfly.com</div>
<div class="t" style="left:408.00px;top:390px;font-size:7.4px;color:#626262;transform:scaleX(0.955);">Marketing Assistant, ...</div>
<div class="t" style="left:492.00px;top:390px;font-size:7.4px;color:#626262;transform:scaleX(0.955);">Sales</div>
<div class="t" style="left:564.00px;top:390px;font-size:7.4px;color:#626262;transform:scaleX(0.955);">131</div>
<div class="t" style="left:707.80px;top:390px;font-size:7.4px;color:#575757;transform:scaleX(0.955);">Miriam Graham</div>
<svg class="b" style="left:871px;top:387.9px;" width="10" height="10" viewBox="0 0 10 10"><path d="M1 9L1.5 6.8L7.3 1Q8.2 0.3 8.9 1.1Q9.7 1.8 9 2.7L3.2 8.5Z" fill="none" stroke="#4a83bd" stroke-width="0.9" stroke-linejoin="round"/></svg>
<svg class="b" style="left:893.3px;top:387.9px;" width="9" height="10" viewBox="0 0 9 10"><path d="M0.6 1.6H8.4" stroke="#4f8fc4" stroke-width="1"/><path d="M3.2 1.4V0.6H5.8V1.4" fill="none" stroke="#4f8fc4" stroke-width="0.7"/><path d="M1.5 1.8L2.1 9.3H6.9L7.5 1.8" fill="none" stroke="#73879c" stroke-width="0.9"/><rect x="3.1" y="3.9" width="2.8" height="2.8" fill="#93aec6"/></svg>
<div class="b" style="left:198px;top:430.88px;width:734px;height:1px;background:#fbfbfb"></div>
<svg class="b" style="left:204.6px;top:410.99px;" width="14" height="14" viewBox="0 0 14 14"><defs><clipPath id="cp11"><circle cx="7" cy="7" r="6.9"/></clipPath></defs><g clip-path="url(#cp11)"><rect width="14" height="14" fill="#b3b3b3"/><circle cx="6.9" cy="5.5" r="2.6" fill="#fff"/><ellipse cx="7" cy="14" rx="5.6" ry="4.8" fill="#fff"/></g></svg>
<div class="t" style="left:224.00px;top:415px;font-size:7.4px;color:#575757;transform:scaleX(0.955);">Alisha bajaj</div>
<div class="t" style="left:306.30px;top:415px;font-size:7.4px;color:#626262;transform:scaleX(0.955);">alishab@clayfly.onmicroso...</div>
<div class="t" style="left:408.00px;top:415px;font-size:7.4px;color:#626262;transform:scaleX(0.955);">Marketing Assistant, ...</div>
<div class="t" style="left:492.00px;top:415px;font-size:7.4px;color:#626262;transform:scaleX(0.955);">Admin</div>
<div class="t" style="left:707.80px;top:415px;font-size:7.4px;color:#575757;transform:scaleX(0.955);">John - Taylor</div>
<div class="t" style="left:808.70px;top:415px;font-size:7.4px;color:#626262;transform:scaleX(0.955);">User</div>
<svg class="b" style="left:871px;top:412.99px;" width="10" height="10" viewBox="0 0 10 10"><path d="M1 9L1.5 6.8L7.3 1Q8.2 0.3 8.9 1.1Q9.7 1.8 9 2.7L3.2 8.5Z" fill="none" stroke="#4a83bd" stroke-width="0.9" stroke-linejoin="round"/></svg>
<svg class="b" style="left:893.3px;top:412.99px;" width="9" height="10" viewBox="0 0 9 10"><path d="M0.6 1.6H8.4" stroke="#4f8fc4" stroke-width="1"/><path d="M3.2 1.4V0.6H5.8V1.4" fill="none" stroke="#4f8fc4" stroke-width="0.7"/><path d="M1.5 1.8L2.1 9.3H6.9L7.5 1.8" fill="none" stroke="#73879c" stroke-width="0.9"/><rect x="3.1" y="3.9" width="2.8" height="2.8" fill="#93aec6"/></svg>
<div class="b" style="left:948.3px;top:40px;width:10.5px;height:387.6px;background:#f8f8f8"></div>
<svg class="b" style="left:950.2px;top:32px;" width="7" height="5" viewBox="0 0 7 5"><path d="M1.3 3.8L3.5 1.3L5.7 3.8Z" fill="#8a8a8a"/></svg>
<div class="b" style="left:948.4px;top:40px;width:10.4px;height:56px;background:#c2c2c2"></div>
<svg class="b" style="left:950.5px;top:419px;" width="7" height="5" viewBox="0 0 7 5"><path d="M1.2 1.2L3.5 3.8L5.8 1.2Z" fill="#444"/></svg>
<div class="b" style="left:198px;top:77px;width:77.8px;height:42.6px;background:#fff;box-shadow:0 1.6px 3.6px rgba(0,0,0,0.2),0 0 1px rgba(0,0,0,0.1)"></div>
<svg class="b" style="left:202.7px;top:84.2px;" width="8" height="8" viewBox="0 0 8 8"><path d="M4 0V8M0 4H8" stroke="#6e8aa8" stroke-width="0.8"/></svg>
<div class="t" style="left:216.70px;top:84px;font-size:8.6px;color:#4d4d4d;transform:scaleX(0.943);">Add User</div>
<svg class="b" style="left:202.7px;top:104.4px;" width="9" height="9.4" viewBox="0 0 9 9.4"><path d="M1 0.6H5.4L8.4 3.6V8.8H1Z" fill="none" stroke="#6d8eb0" stroke-width="1"/><path d="M5.4 0.6V3.6H8.4" fill="none" stroke="#6d8eb0" stroke-width="0.8"/></svg>
<div class="t" style="left:216.70px;top:105px;font-size:8.6px;color:#4d4d4d;transform:scaleX(0.951);">Bulk Add</div>
</body></html>
